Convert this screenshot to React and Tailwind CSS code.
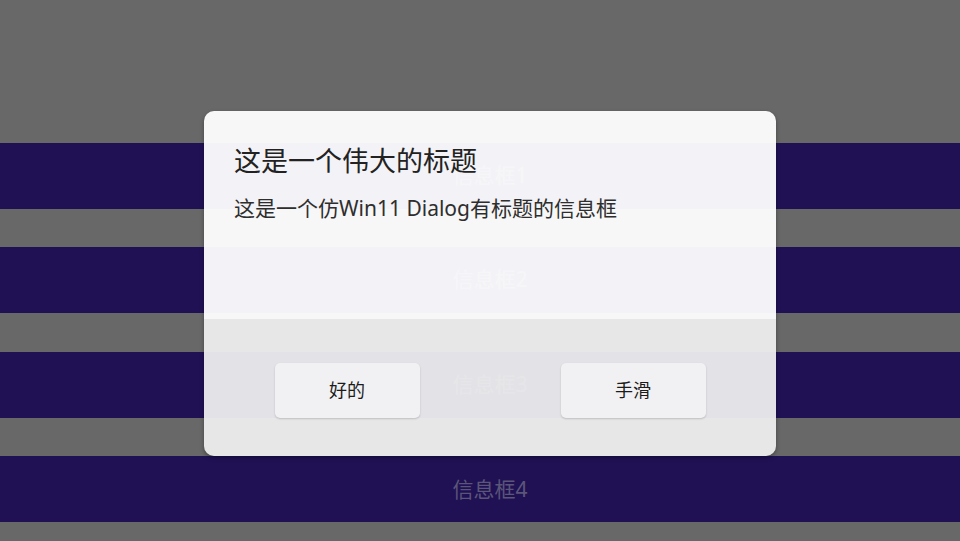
export default function App() {
  const items = ["信息框1", "信息框2", "信息框3", "信息框4"];

  return (
    <div
      className="relative h-[541px] w-full overflow-hidden bg-[#686868]"
      style={{ fontFamily: '"Noto Sans", "Noto Sans CJK SC", sans-serif' }}
    >
      {/* list behind the dialog */}
      <div className="flex flex-col gap-[38.6px] pt-[142.5px]">
        {items.map((t) => (
          <div
            key={t}
            className="flex h-[66px] items-center justify-center bg-[#201155] pl-[20px] text-[21px] text-[#5b5678]"
          >
            {t}
          </div>
        ))}
      </div>

      {/* dialog overlay */}
      <div className="absolute inset-0 flex items-center justify-center pl-[20px] pt-[26px]">
        <div className="flex h-[345px] w-[572px] flex-col overflow-hidden rounded-[10px] shadow-[0_2px_4px_rgba(0,0,0,0.35)]">
          <div className="h-[208px] bg-white/95 px-[30px] pt-[32px]">
            <h1 className="text-[27px] leading-[36px] text-[#222222]">这是一个伟大的标题</h1>
            <p className="mt-[15px] text-[21px] leading-[28px] text-[#2e2e2e]">
              这是一个仿Win11 Dialog有标题的信息框
            </p>
          </div>
          <div className="flex flex-1 items-center justify-around bg-[#eeeeee]/95 pt-[5px]">
            <button className="h-[55px] w-[145px] rounded-[5px] bg-[#f1f1f3] text-[18px] text-[#1b1b1b] shadow-[0_1px_2px_rgba(0,0,0,0.18)]">
              好的
            </button>
            <button className="h-[55px] w-[145px] rounded-[5px] bg-[#f1f1f3] text-[18px] text-[#1b1b1b] shadow-[0_1px_2px_rgba(0,0,0,0.18)]">
              手滑
            </button>
          </div>
        </div>
      </div>
    </div>
  );
}
